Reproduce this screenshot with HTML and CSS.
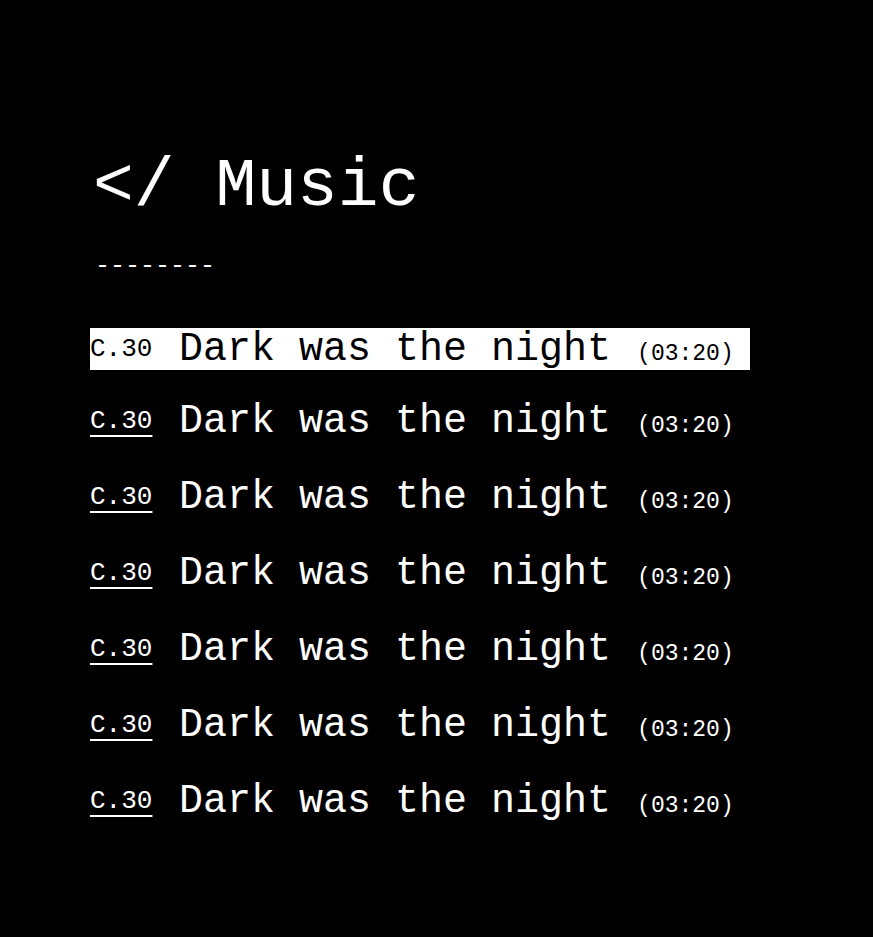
FILE: index.html
```html
<!DOCTYPE html>
<html lang="en">
<head>
<meta charset="utf-8">
<title>Music</title>
<link rel="stylesheet" href="styles.css">
</head>
<body>
<main class="page">
  <h1 class="title">&lt;/ Music</h1>
  <div class="rule">--------</div>
  <ul class="tracks">
    <li class="track active"><span class="code">C.30</span><span class="name">Dark was the night</span><span class="time">(03:20)</span></li>
    <li class="track"><span class="code">C.30</span><span class="name">Dark was the night</span><span class="time">(03:20)</span></li>
    <li class="track"><span class="code">C.30</span><span class="name">Dark was the night</span><span class="time">(03:20)</span></li>
    <li class="track"><span class="code">C.30</span><span class="name">Dark was the night</span><span class="time">(03:20)</span></li>
    <li class="track"><span class="code">C.30</span><span class="name">Dark was the night</span><span class="time">(03:20)</span></li>
    <li class="track"><span class="code">C.30</span><span class="name">Dark was the night</span><span class="time">(03:20)</span></li>
    <li class="track"><span class="code">C.30</span><span class="name">Dark was the night</span><span class="time">(03:20)</span></li>
  </ul>
</main>
</body>
</html>
```
FILE: styles.css
```css
html, body {
  margin: 0;
  padding: 0;
  background: #000;
  color: #fff;
  font-family: "Liberation Mono", "DejaVu Sans Mono", monospace;
}
.page {
  padding: 147px 0 0 90px;
}
.title {
  margin: 0 0 0 3px;
  font-size: 68px;
  font-weight: normal;
  line-height: 80px;
}
.rule {
  margin: 30px 0 0 5px;
  font-size: 25px;
  line-height: 20px;
}
.tracks {
  list-style: none;
  margin: 51px 0 0 0;
  padding: 0;
}
.track {
  display: block;
  width: 660px;
  height: 42px;
  line-height: 42px;
  margin-bottom: 34px;
  white-space: nowrap;
}
.track.active {
  background: #fff;
  color: #000;
  margin-bottom: 30px;
}
.code {
  display: inline-block;
  font-size: 26px;
  vertical-align: 4px;
  width: 89px;
}
.track .code {
  text-decoration: underline;
  text-underline-offset: 7px;
  text-decoration-thickness: 2px;
}
.track.active .code {
  text-decoration: none;
}
.name {
  font-size: 40px;
  margin-right: 26px;
}
.time {
  font-size: 23px;
}
```
